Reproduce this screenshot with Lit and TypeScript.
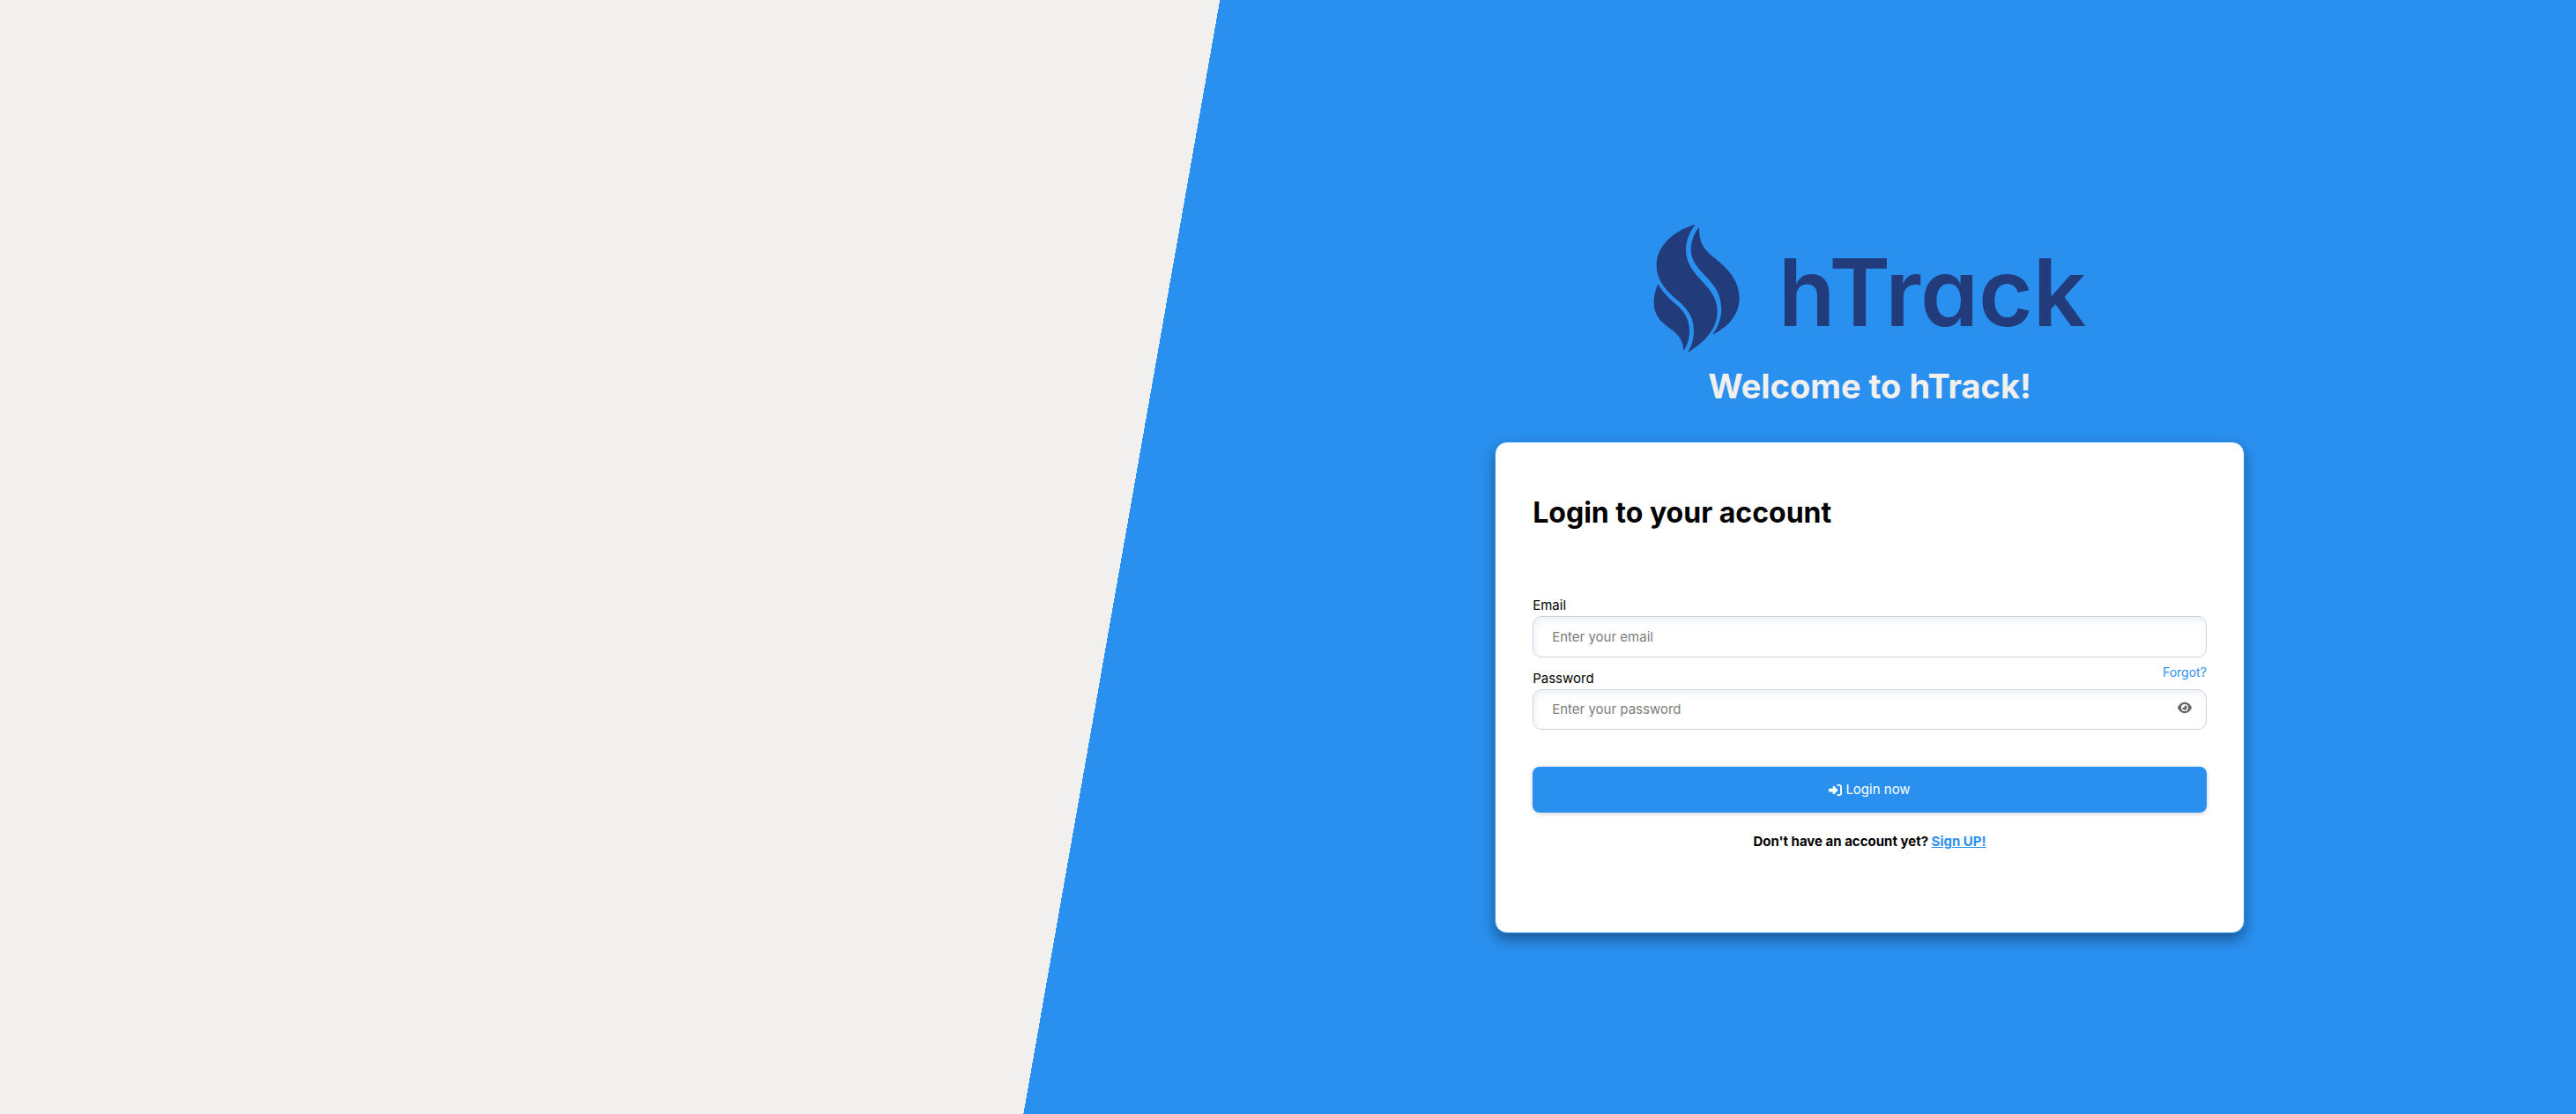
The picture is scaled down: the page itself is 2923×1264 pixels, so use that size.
import { LitElement, html, css, svg } from "lit";
import { customElement, state } from "lit/decorators.js";

const flame = svg`
  <path d="M191 44C120 64 59 115 59 182C59 240 100 275 133 304C165 332 186 362 186 405C186 435 178 458 165 480C215 450 266 405 266 340C266 290 235 260 205 227C180 200 159 172 159 130C159 95 175 65 191 44Z"/>
  <path d="M204 53C180 82 170 125 180 155C195 200 245 230 265 270C288 320 285 370 250 419C310 390 341 345 341 295C341 225 285 180 250 153C220 128 203 105 204 53Z"/>
  <path d="M64 247C55 268 50 285 50 310C50 355 75 378 105 398C135 418 150 440 151 475C163 455 171 435 171 405C171 365 150 338 125 316C100 295 80 275 64 247Z"/>`;

@customElement("app-root")
export class AppRoot extends LitElement {
  @state() private revealed = false;

  static styles = css`
    :host {
      display: block;
      font-family: Inter, "Open Sans", sans-serif;
      font-size: 15px;
      line-height: 20px;
      color: #000;
    }
    * {
      box-sizing: border-box;
    }
    .page {
      display: grid;
      grid-template-columns: 58.03fr 29.1fr 12.87fr;
      align-items: center;
      min-height: 100vh;
      padding-top: 35px;
      background: linear-gradient(100deg, #f1f0ee 44%, #2a90f0 44%);
    }
    .panel {
      grid-column: 2;
    }
    .brand {
      display: flex;
      justify-content: center;
      align-items: flex-end;
      gap: 28px;
      height: 170px;
      padding-right: 16px;
      color: #223b7a;
    }
    .flame {
      flex: none;
      width: 130px;
      height: 170px;
      fill: currentColor;
    }
    .name {
      font-size: 106px;
      line-height: 156px;
      font-weight: 600;
      font-feature-settings: "cv11";
    }
    .welcome {
      margin: 4px 0 39px;
      font-size: 38px;
      line-height: 48px;
      font-weight: 700;
      text-align: center;
      color: #f1f0ee;
    }
    .card {
      padding: 60px 42px 93px;
      border: 1px solid #2a90f0;
      border-radius: 14px;
      background: #fff;
      box-shadow: 0 7px 16px rgba(0, 0, 0, 0.4);
    }
    .title {
      margin: 0 0 75px;
      font-size: 32px;
      line-height: 40px;
      font-weight: 700;
    }
    .label {
      display: block;
      padding-bottom: 2px;
    }
    .row {
      display: flex;
      justify-content: space-between;
      align-items: flex-start;
      padding-top: 7px;
    }
    .row .label {
      padding-top: 7px;
    }
    .forgot {
      font-size: 14px;
      color: #2a90f0;
      text-decoration: none;
    }
    .field {
      display: flex;
      align-items: center;
      height: 47px;
      padding: 0 16px 0 21px;
      border: 1px solid #cfd3de;
      border-radius: 10px;
      background: #fff;
      box-shadow: inset 2px 4px 8px #edf1f6;
    }
    .row + .field {
      height: 46px;
    }
    .input {
      flex: 1;
      min-width: 0;
      padding: 0;
      border: 0;
      outline: 0;
      background: none;
      font: inherit;
      color: inherit;
    }
    .input::placeholder {
      color: #7d7d7d;
      opacity: 1;
    }
    .eye {
      display: flex;
      padding: 0 0 4px;
      border: 0;
      background: none;
      color: #666;
      cursor: pointer;
    }
    .eye svg {
      width: 16px;
      height: 16px;
      fill: currentColor;
    }
    .submit {
      display: flex;
      justify-content: center;
      align-items: center;
      gap: 4px;
      width: 100%;
      height: 52px;
      margin: 42px 0 23px;
      border: 0;
      border-radius: 8px;
      background: #2a90f0;
      box-shadow: 0 1px 5px rgba(0, 0, 0, 0.2);
      font: inherit;
      color: #fff;
      cursor: pointer;
    }
    .submit svg {
      width: 15px;
      height: 15px;
      fill: currentColor;
    }
    .signup {
      margin: 0;
      font-weight: 700;
      text-align: center;
    }
    .signup a {
      color: #2a90f0;
    }
  `;

  private toggle() {
    this.revealed = !this.revealed;
  }

  render() {
    return html`
      <main class="page">
        <div class="panel">
          <div class="brand">
            <svg class="flame" viewBox="0 0 390 510" aria-hidden="true">${flame}</svg>
            <span class="name">hTrack</span>
          </div>
          <h1 class="welcome">Welcome to hTrack!</h1>
          <form class="card" @submit=${(e: Event) => e.preventDefault()}>
            <h2 class="title">Login to your account</h2>
            <label class="label" for="email">Email</label>
            <div class="field">
              <input class="input" id="email" type="email" placeholder="Enter your email" />
            </div>
            <div class="row">
              <label class="label" for="password">Password</label>
              <a class="forgot" href="#">Forgot?</a>
            </div>
            <div class="field">
              <input class="input" id="password" type=${this.revealed ? "text" : "password"} placeholder="Enter your password" />
              <button class="eye" type="button" aria-label="Show password" @click=${this.toggle}>
                <svg viewBox="0 0 576 512" aria-hidden="true"><path d="M288 32c-80.8 0-145.5 36.8-192.6 80.6C48.6 156 17.3 208 2.5 243.7c-3.3 7.9-3.3 16.7 0 24.6C17.3 304 48.6 356 95.4 399.4C142.5 443.2 207.2 480 288 480s145.5-36.8 192.6-80.6c46.8-43.5 78.1-95.4 93-131.1c3.3-7.9 3.3-16.7 0-24.6c-14.9-35.7-46.2-87.7-93-131.1C433.5 68.8 368.8 32 288 32zM144 256a144 144 0 1 1 288 0 144 144 0 1 1-288 0zm144-64c0 35.3-28.7 64-64 64c-7.1 0-13.9-1.2-20.3-3.3c-5.5-1.8-11.9 1.6-11.7 7.4c.3 6.9 1.3 13.8 3.2 20.7c13.7 51.2 66.4 81.6 117.6 67.9s81.6-66.4 67.9-117.6c-11.1-41.5-47.8-69.4-88.6-71.1c-5.8-.2-9.2 6.1-7.4 11.7c2.1 6.4 3.3 13.2 3.3 20.3z"/></svg>
              </button>
            </div>
            <button class="submit" type="submit">
              <svg viewBox="0 0 512 512" aria-hidden="true"><path d="M217.9 105.9L340.7 228.7c7.2 7.2 11.3 17.1 11.3 27.3s-4.1 20.1-11.3 27.3L217.9 406.1c-6.4 6.4-15 9.9-24 9.9c-18.7 0-33.9-15.2-33.9-33.9l0-62.1L32 320c-17.7 0-32-14.3-32-32l0-64c0-17.7 14.3-32 32-32l128 0 0-62.1c0-18.7 15.2-33.9 33.9-33.9c9 0 17.6 3.6 24 9.9zM352 416l64 0c17.7 0 32-14.3 32-32l0-256c0-17.7-14.3-32-32-32l-64 0c-17.7 0-32-14.3-32-32s14.3-32 32-32l64 0c53 0 96 43 96 96l0 256c0 53-43 96-96 96l-64 0c-17.7 0-32-14.3-32-32s14.3-32 32-32z"/></svg>
              Login now
            </button>
            <p class="signup">Don't have an account yet? <a href="#">Sign UP!</a></p>
          </form>
        </div>
      </main>
    `;
  }
}
